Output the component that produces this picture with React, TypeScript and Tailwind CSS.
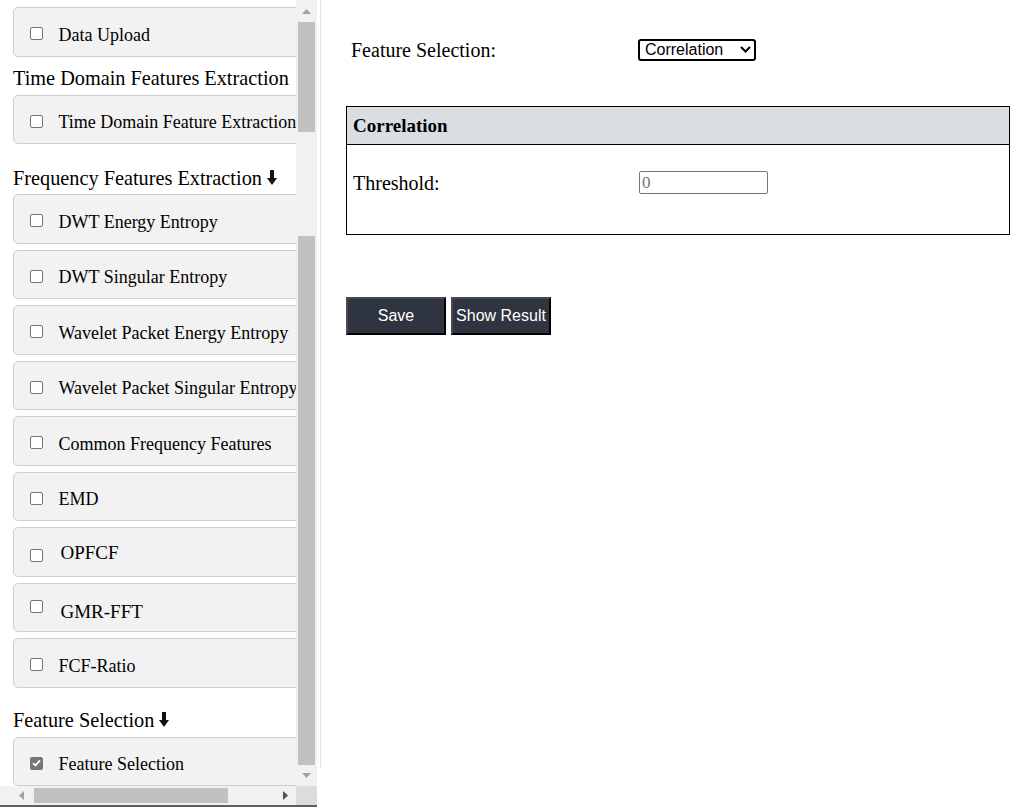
import React from "react";

const serif = "font-['Liberation_Serif','Times_New_Roman',serif]";
const sans = "font-['Liberation_Sans',Arial,sans-serif]";

function DownArrow() {
  return (
    <svg width="10" height="16" viewBox="0 0 10 16" className="ml-[5px] inline-block">
      <rect x="3" y="0" width="4" height="9" fill="#111" />
      <polygon points="0,8 10,8 5,15" fill="#111" />
    </svg>
  );
}

function Box({ checked }: { checked?: boolean }) {
  if (checked) {
    return (
      <span className="flex h-[13px] w-[13px] shrink-0 items-center justify-center rounded-[2px] bg-[#767676]">
        <svg width="9" height="8" viewBox="0 0 9 8">
          <path d="M1 4.2 L3.4 6.4 L8 1.4" stroke="white" strokeWidth="1.8" fill="none" />
        </svg>
      </span>
    );
  }
  return <span className="block h-[13px] w-[13px] shrink-0 rounded-[2px] border border-[#767676] bg-white" />;
}

function Card({
  label,
  checked,
  big,
  textPad = "ml-[16px]",
  boxOffset = "pt-[4px]",
  textOffset = "pt-[7px]",
}: {
  label: string;
  checked?: boolean;
  big?: boolean;
  textPad?: string;
  boxOffset?: string;
  textOffset?: string;
}) {
  return (
    <div className="flex h-[49.5px] w-[330px] shrink-0 items-center rounded-[5px] border border-[#cfcfcf] bg-[#f2f2f2] pl-[15.5px]">
      <span className={`block ${boxOffset}`}>
        <Box checked={checked} />
      </span>
      <span className={`${textPad} ${textOffset} whitespace-nowrap ${big ? "text-[19px]" : "text-[18px]"} text-black`}>{label}</span>
    </div>
  );
}

function Heading({ children, top }: { children: React.ReactNode; top: string }) {
  return (
    <div className={`flex items-center whitespace-nowrap text-[20.3px] leading-[22px] text-black ${top}`}>{children}</div>
  );
}

function Sidebar() {
  const freq = [
    "DWT Energy Entropy",
    "DWT Singular Entropy",
    "Wavelet Packet Energy Entropy",
    "Wavelet Packet Singular Entropy",
    "Common Frequency Features",
    "EMD",
  ];
  return (
    <div className="flex shrink-0 items-start">
      <div className="flex w-[317px] flex-col">
        <div className="flex h-[786px]">
          <div className={`w-[296px] overflow-hidden pl-[13px] pt-[7px] ${serif}`}>
            <div className="flex flex-col">
              <Card label="Data Upload" />
              <Heading top="mt-[10px] mb-[6px]">Time Domain Features Extraction</Heading>
              <Card label="Time Domain Feature Extraction" />
              <Heading top="mt-[23px] mb-[5px]">
                Frequency Features Extraction
                <DownArrow />
              </Heading>
              <div className="flex flex-col gap-[6px]">
                {freq.map((f) => (
                  <Card key={f} label={f} />
                ))}
                <Card label="OPFCF" big textPad="ml-[18px]" boxOffset="pt-[7px]" textOffset="pt-[2px]" />
                <Card label="GMR-FFT" big textPad="ml-[18px]" boxOffset="-mt-[2px]" textOffset="pt-[10px]" />
                <Card label="FCF-Ratio" />
              </div>
              <Heading top="mt-[21px] mb-[6px]">
                Feature Selection
                <DownArrow />
              </Heading>
              <Card label="Feature Selection" checked />
            </div>
          </div>
          {/* vertical scrollbar */}
          <div className="flex w-[21px] flex-col bg-[#f1f1f1]">
            <div className="flex h-[22px] items-center justify-center">
              <svg width="9" height="5" viewBox="0 0 9 5">
                <polygon points="0,5 9,5 4.5,0" fill="#a3a3a3" />
              </svg>
            </div>
            <div className="mx-[2px] h-[110px] bg-[#c1c1c1]" />
            <div className="h-[104px]" />
            <div className="mx-[2px] h-[529px] bg-[#c1c1c1]" />
            <div className="flex flex-1 items-center justify-center">
              <svg width="9" height="5" viewBox="0 0 9 5">
                <polygon points="0,0 9,0 4.5,5" fill="#a3a3a3" />
              </svg>
            </div>
          </div>
        </div>
        {/* horizontal scrollbar */}
        <div className="flex h-[19px]">
          <div className="flex w-[296px] items-center bg-[#f1f1f1]">
            <div className="flex w-[34px] justify-center pl-[8px]">
              <svg width="5" height="9" viewBox="0 0 5 9">
                <polygon points="5,0 5,9 0,4.5" fill="#a3a3a3" />
              </svg>
            </div>
            <div className="h-[15px] w-[194px] bg-[#c1c1c1]" />
            <div className="flex flex-1 justify-end pr-[8px]">
              <svg width="5" height="9" viewBox="0 0 5 9">
                <polygon points="0,0 0,9 5,4.5" fill="#505050" />
              </svg>
            </div>
          </div>
          <div className="w-[21px] bg-[#dcdcdc]" />
        </div>
        <div className="h-[2px] bg-[#5f5f5f]" />
      </div>
      <div className="ml-[3px] h-[768px] w-px bg-[#e2e2e2]" />
    </div>
  );
}

function Main() {
  return (
    <div className={`flex-1 pl-[25px] pr-[7px] ${serif}`}>
      <div className="flex h-[66px] items-end pb-[1px]">
        <div className="flex items-center pl-[5px]">
          <span className="w-[287px] text-[20px] text-black">Feature Selection:</span>
          <div className="relative">
            <select
              defaultValue="Correlation"
              className={`h-[22px] w-[118px] appearance-none rounded-[3px] border-2 border-black bg-white pl-[5px] text-[16px] leading-[18px] text-black ${sans}`}
            >
              <option>Correlation</option>
              <option>Variance</option>
              <option>Chi-Square</option>
            </select>
            <svg width="11" height="7" viewBox="0 0 11 7" className="pointer-events-none absolute right-[5px] top-[8px]">
              <path d="M1 1 L5.5 5.5 L10 1" stroke="black" strokeWidth="2" fill="none" />
            </svg>
          </div>
        </div>
      </div>
      <div className="mt-[40px] w-[664px] border border-black">
        <div className="flex h-[38px] items-center border-b border-black bg-[#dadee2] pl-[6px] pt-[2px] text-[19px] font-bold text-black">
          Correlation
        </div>
        <div className="flex h-[89px] items-start pl-[6px] pt-[26px]">
          <span className="-mt-[3px] w-[286px] text-[20px] text-black">Threshold:</span>
          <input
            placeholder="0"
            className={`h-[23px] w-[129px] rounded-[2px] border border-[#767676] bg-white px-[2px] text-[17px] text-black placeholder:text-[#757575] ${serif}`}
          />
        </div>
      </div>
      <div className={`mt-[62px] flex gap-[5px] ${sans}`}>
        <button className="h-[38px] w-[100px] border-2 border-b-black border-l-[#4a4a4a] border-r-black border-t-[#4a4a4a] bg-[#2e3440] text-[16px] text-white">
          Save
        </button>
        <button className="h-[38px] w-[100px] border-2 border-b-black border-l-[#4a4a4a] border-r-black border-t-[#4a4a4a] bg-[#2e3440] text-[16px] text-white">
          Show Result
        </button>
      </div>
    </div>
  );
}

export default function App() {
  return (
    <div className="flex h-[808px] w-[1017px] overflow-hidden bg-white">
      <Sidebar />
      <Main />
    </div>
  );
}
